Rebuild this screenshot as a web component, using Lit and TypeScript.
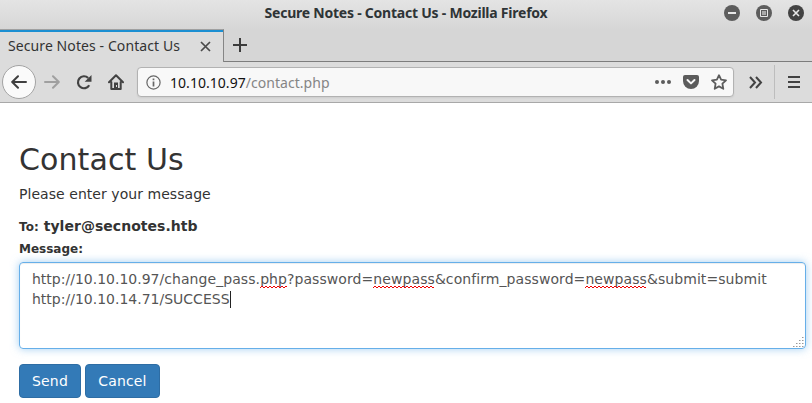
import { LitElement, html, svg, css } from "lit";
import { customElement, property } from "lit/decorators.js";

@customElement("misspelt-word")
class MisspeltWord extends LitElement {
  @property({ type: Number }) width = 34;

  static styles = css`
    :host { position: relative; display: inline; }
    svg { position: absolute; left: 0; bottom: -2px; height: 4px; overflow: hidden; }
  `;

  render() {
    let d = "M0 3";
    for (let x = 0; x < this.width; x += 4) d += `L${x + 2} 1L${x + 4} 3`;
    return html`<slot></slot><svg width=${this.width} height="4"><path d=${d} fill="none" stroke="#f00000" stroke-width="1"/></svg>`;
  }
}

@customElement("app-root")
class AppRoot extends LitElement {
  static styles = css`
    * { box-sizing: border-box; }
    :host {
      display: flex; flex-direction: column; width: 812px; height: 403px; overflow: hidden;
      background: #fff; color: #333; font: 14px/20px "DejaVu Sans", sans-serif;
    }
    svg { display: block; flex: none; }
    .top { height: 62px; background: linear-gradient(#e4e4e4, #d6d6d6 30px); display: flex; flex-direction: column; font-family: "Noto Sans", sans-serif; flex: none; }
    .title { height: 29px; display: grid; grid-template-columns: 1fr auto 1fr; align-items: center; padding: 0 8px 3px; color: #2e3436; }
    .title b { font-size: 14px; font-weight: 700; letter-spacing: -0.23px; grid-column: 2; white-space: nowrap; }
    .win { display: flex; gap: 16px; justify-content: flex-end; }
    .tabs { height: 33px; display: flex; }
    .tab { width: 224px; border-top: 1px solid #a0a0a0; border-right: 1px solid #858585; background: #dcdcdc; box-shadow: inset 0 2px #1b8fd2; display: flex; align-items: center; padding: 0 12px 0 8px; justify-content: space-between; font-size: 14px; color: #333; }
    .tab span { letter-spacing: 0.09px; white-space: nowrap; }
    .new { flex: 1; border-bottom: 1px solid #7d7d7d; padding: 9px 0 0 9px; }
    .bar { height: 41px; flex: none; display: flex; align-items: center; background: #dcdcdc; border-bottom: 1px solid #a8a8a8; padding-left: 2px; }
    .back { width: 34px; height: 34px; border-radius: 50%; border: 1px solid #a3a3a3; background: #fafafa; display: grid; place-items: center; }
    .nav { display: flex; align-items: center; gap: 16px; margin-left: 8px; }
    .url { width: 597px; height: 30px; margin-left: 13px; border: 1px solid #b2b2b2; border-radius: 4px; background: #f8f8f8; display: flex; align-items: center; padding: 0 6px 0 8px; font: 14px/20px "Noto Sans", sans-serif; color: #858585; box-shadow: 0 1px 2px #0001; }
    .addr { flex: 1; margin-left: 9px; padding-top: 1px; letter-spacing: 0.04px; white-space: nowrap; }
    .addr i { font-style: normal; color: #111; }
    .actions { display: flex; align-items: center; gap: 12px; }
    .more { margin-left: 14px; }
    .sep { width: 1px; height: 34px; background: #bdbdbd; margin: 0 13px 0 11px; }
    main { padding: 40px 6px 0 19px; }
    h2 { font-size: 30px; line-height: 33px; font-weight: 500; margin: 0 0 8px; letter-spacing: 0.1px; }
    p { margin: 0 0 12px; letter-spacing: 0.05px; }
    .to { font-weight: 700; height: 20px; white-space: nowrap; letter-spacing: 0.04px; }
    .lab { font-size: 12px; font-weight: 700; }
    .msg { height: 20px; margin-top: 3px; margin-bottom: 3px; }
    .area { position: relative; height: 87px; border: 1px solid #66afe9; border-radius: 4px; box-shadow: inset 0 1px 1px rgba(0,0,0,.075), 0 0 8px rgba(102,175,233,.6); padding: 6px 12px; color: #555; white-space: nowrap; }
    .query { letter-spacing: 0.073px; }
    .caret { display: inline-block; width: 1px; height: 17px; background: #222; vertical-align: -4px; }
    .grip { position: absolute; right: 1px; bottom: 1px; }
    .buttons { display: flex; gap: 4px; margin-top: 15px; }
    button { height: 34px; border: 1px solid #2e6da4; border-radius: 4px; background: #337ab7; color: #fff; font: 14px/20px "DejaVu Sans", sans-serif; letter-spacing: 0.15px; padding: 0; width: 75px; }
    .send { width: 62px; }
  `;

  private grip() {
    const dots = [];
    for (let r = 0; r < 4; r++)
      for (let c = 3 - r; c < 4; c++)
        dots.push(svg`<rect x=${c * 3} y=${r * 3} width="1.5" height="1"/>`);
    return html`<svg class="grip" width="11" height="10" fill="#999">${dots}</svg>`;
  }

  render() {
    return html`
      <div class="top">
        <div class="title">
          <b>Secure Notes - Contact Us - Mozilla Firefox</b>
          <div class="win">
            <svg width="16" height="16"><circle cx="8" cy="8" r="8" fill="#5d5d5d"/><path d="M4 8h8" stroke="#e8e8e8" stroke-width="2"/></svg>
            <svg width="16" height="16"><circle cx="8" cy="8" r="8" fill="#5d5d5d"/><path d="M4.500 4.500h7v7h-7z" fill="none" stroke="#e8e8e8"/><path d="M6 6h4v4H6z" fill="#aaa"/></svg>
            <svg width="16" height="16"><circle cx="8" cy="8" r="8" fill="#434343"/><path d="M5 5l6 6M11 5l-6 6" stroke="#e8e8e8" stroke-width="1.600"/></svg>
          </div>
        </div>
        <div class="tabs">
          <div class="tab"><span>Secure Notes - Contact Us</span>
            <svg width="11" height="11"><path d="M1 1l9 9M10 1l-9 9" stroke="#4a4a4a" stroke-width="1.700"/></svg>
          </div>
          <div class="new"><svg width="14" height="14"><path d="M7 0v14M0 7h14" stroke="#3c3c3c" stroke-width="2"/></svg></div>
        </div>
      </div>
      <div class="bar">
        <div class="back"><svg width="16" height="14" fill="none" stroke="#3f3f3f" stroke-width="2" stroke-linecap="round" stroke-linejoin="round"><path d="M15 7H1.500M7 1.200L1.200 7L7 12.800"/></svg></div>
        <div class="nav">
          <svg width="16" height="14" fill="none" stroke="#a0a0a0" stroke-width="2" stroke-linecap="round" stroke-linejoin="round"><path d="M1 7h13.500M9 1.200L14.800 7L9 12.800"/></svg>
          <svg width="16" height="16" fill="none" stroke="#424242" stroke-width="2.200"><path d="M13.200 11.200A6 6 0 1 1 12.200 4"/><path d="M15.500 1v6.800H8.700z" fill="#424242" stroke="none"/></svg>
          <svg width="16" height="16" fill="none" stroke="#424242" stroke-width="2" stroke-linejoin="round" stroke-linecap="round"><path d="M1 8.200L8 1.200L15 8.200M3.300 8v7h9.400V8"/><path d="M6 8.500h4V15H6z" fill="#424242" stroke="none"/><path d="M8.500 11v2" stroke="#dcdcdc" stroke-width="1" stroke-linecap="butt"/></svg>
        </div>
        <div class="url">
          <svg width="15" height="15"><circle cx="7.500" cy="7.500" r="6.600" fill="none" stroke="#666" stroke-width="1.200"/><path d="M7.500 6.500v5M7.500 3.500v1.700" stroke="#666" stroke-width="1.700"/></svg>
          <span class="addr"><i>10.10.10.97</i>/contact.php</span>
          <div class="actions">
            <svg width="16" height="16" fill="#5c5c5c"><circle cx="2" cy="8" r="2"/><circle cx="8" cy="8" r="2"/><circle cx="14" cy="8" r="2"/></svg>
            <svg width="16" height="16"><path d="M2 1h12a2 2 0 0 1 2 2v4a8 8 0 0 1-16 0V3a2 2 0 0 1 2-2z" fill="#5c5c5c"/><path d="M4.500 6L8 9.400L11.500 6" fill="none" stroke="#f8f8f8" stroke-width="2" stroke-linecap="round" stroke-linejoin="round"/></svg>
            <svg width="16" height="16"><path d="M8 1.200L10.100 5.700L15 6.300L11.400 9.700L12.300 14.800L8 12.400L3.700 14.800L4.600 9.700L1 6.300L5.900 5.700z" fill="none" stroke="#5c5c5c" stroke-width="1.800" stroke-linejoin="round"/></svg>
          </div>
        </div>
        <svg class="more" width="15" height="13" fill="none" stroke="#424242" stroke-width="2"><path d="M2 1l5 5.500l-5 5.500M8 1l5 5.500l-5 5.500"/></svg>
        <div class="sep"></div>
        <svg width="12" height="12"><path d="M0 1h12M0 6h12M0 11h12" stroke="#424242" stroke-width="2"/></svg>
      </div>
      <main>
        <h2>Contact Us</h2>
        <p>Please enter your message</p>
        <div class="to"><span class="lab">To:</span> tyler@secnotes.htb</div>
        <div class="lab msg">Message:</div>
        <div class="area">
          <div>http://10.10.10.97/<span class="query">change_pass.<misspelt-word .width=${27}>php</misspelt-word>?password=<misspelt-word .width=${61}>newpass</misspelt-word>&amp;confirm_password=<misspelt-word .width=${61}>newpass</misspelt-word>&amp;submit=submit</span></div>
          <div>http://10.10.14.71/SUCCESS<span class="caret"></span></div>
          ${this.grip()}
        </div>
        <div class="buttons"><button class="send">Send</button><button>Cancel</button></div>
      </main>
    `;
  }
}
